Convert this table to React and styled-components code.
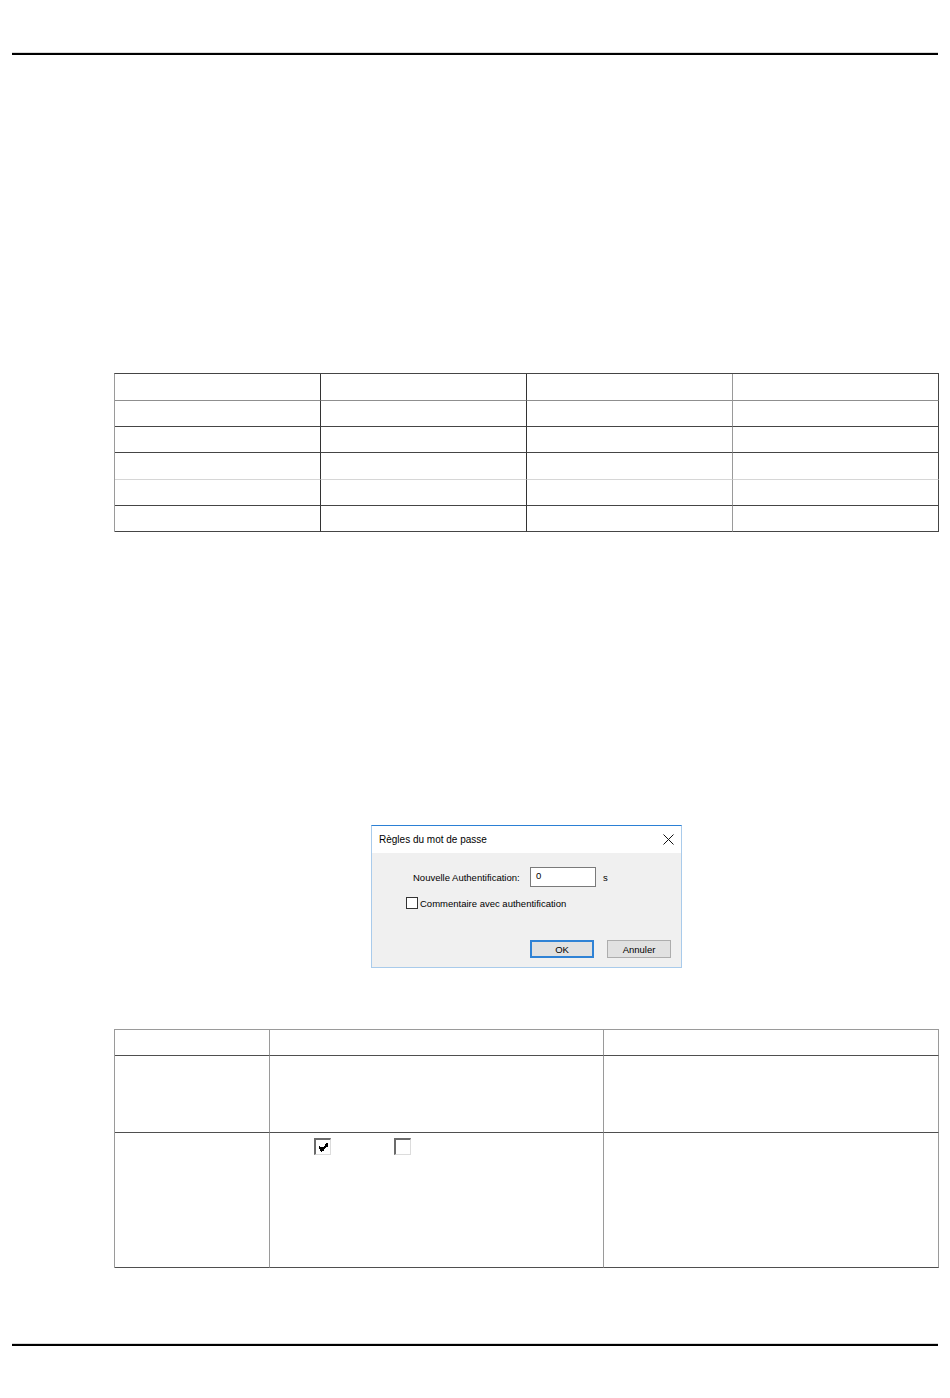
import React from 'react';
import styled, { createGlobalStyle } from 'styled-components';

const GlobalStyle = createGlobalStyle`
  html, body { margin: 0; padding: 0; background: #ffffff; }
  body { font-family: "Liberation Sans", Arial, sans-serif; color: #000; }
  *, *::before, *::after { box-sizing: border-box; }
`;

const Page = styled.div`
  width: 950px;
  min-height: 1398px;
  padding: 52px 12px 0;
  display: flex;
  flex-direction: column;
`;

const Rule = styled.div`
  height: 3px;
  width: 926px;
  border-top: 1px solid #d9d9d9;
  background: #000;
  margin-top: ${(p) => p.$mt || 0}px;
`;

const Content = styled.div`
  margin-left: 102px;
  width: 825px;
  display: flex;
  flex-direction: column;
`;

const Grid = styled.div`
  display: grid;
  grid-template-columns: ${(p) => p.$cols};
  border-top: 1px solid ${(p) => p.$top};
  border-left: 1px solid ${(p) => p.$left};
  margin-top: ${(p) => p.$mt}px;
`;

const Cell = styled.div`
  height: ${(p) => p.$h}px;
  border-right: 1px solid ${(p) => p.$vc};
  border-bottom: 1px solid ${(p) => p.$hc};
  display: flex;
  align-items: flex-start;
  gap: ${(p) => p.$gap || 0}px;
  padding: ${(p) => p.$pad || '0'};
`;

const ClassicBox = styled.span`
  width: 17px;
  height: 17px;
  background: #fff;
  border-top: 2px solid #6b6b6b;
  border-left: 2px solid #6b6b6b;
  border-right: 1px solid #dcdcdc;
  border-bottom: 1px solid #dcdcdc;
  display: flex;
  align-items: flex-start;
  justify-content: flex-start;
  padding: 3px 0 0 2px;
`;

const Dialog = styled.div`
  align-self: center;
  width: 311px;
  height: 143px;
  margin-top: 293px;
  display: flex;
  flex-direction: column;
  background: #f0f0f0;
  border: 1px solid #a9cbeb;
  border-top-color: #2b80d5;
`;

const TitleBar = styled.div`
  height: 27px;
  background: #fff;
  display: flex;
  align-items: center;
  justify-content: space-between;
  padding: 0 7px 0 7px;
  font-size: 10px;
`;

const Body = styled.div`
  flex: 1;
  display: flex;
  flex-direction: column;
  padding: 0 10px 9px 0;
  font-size: 9.5px;
`;

const FieldRow = styled.div`
  display: flex;
  align-items: center;
  margin-top: 14px;
  padding-left: 41px;
  height: 20px;
`;

const Label = styled.span`
  width: 117px;
  white-space: nowrap;
`;

const TextInput = styled.div`
  width: 66px;
  height: 20px;
  background: #fff;
  border: 1px solid #7a7a7a;
  padding: 2px 0 0 5px;
  font-size: 9.5px;
`;

const Unit = styled.span`
  margin-left: 7px;
`;

const CheckRow = styled.label`
  display: flex;
  align-items: center;
  margin-top: 10px;
  padding-left: 34px;
  white-space: nowrap;
`;

const WinBox = styled.span`
  width: 12px;
  height: 12px;
  background: #fff;
  border: 1px solid #333;
  margin-right: 2px;
`;

const ButtonRow = styled.div`
  margin-top: auto;
  display: flex;
  justify-content: flex-end;
  gap: 13px;
`;

const Button = styled.div`
  width: 64px;
  height: 18px;
  display: flex;
  align-items: center;
  justify-content: center;
  background: #e1e1e1;
  border: ${(p) => (p.$primary ? '2px solid #2f82d5' : '1px solid #adadad')};
  font-size: 9.5px;
`;

const CloseIcon = () => (
  <svg width="11" height="11" viewBox="0 0 11 11" aria-hidden="true">
    <path d="M0.5 0.5 L10.5 10.5 M10.5 0.5 L0.5 10.5" stroke="#111" strokeWidth="1" fill="none" />
  </svg>
);

const CheckMark = () => (
  <svg width="10" height="9" viewBox="0 0 7 7" shapeRendering="crispEdges" aria-hidden="true">
    <path
      fill="#000"
      d="M6 0h1v3h-1z M5 1h1v3h-1z M4 2h1v3h-1z M0 2h1v3h-1z M1 3h1v3h-1z M2 3h1v4h-1z M3 3h1v3h-1z"
    />
  </svg>
);

const DARK = '#454545';
const GRAY = '#9a9a9a';

const table1Rows = [
  { h: 27, line: '#8f8f8f' },
  { h: 26, line: DARK },
  { h: 26, line: DARK },
  { h: 27, line: '#d6d6d6' },
  { h: 26, line: DARK },
  { h: 26, line: DARK },
];
const table1Cols = ['#333', '#333', GRAY, DARK];

const table2Rows = [26, 77, 135];

export default function App() {
  return (
    <>
      <GlobalStyle />
      <Page>
        <Rule />
        <Content>
          <Grid $cols="repeat(4, 206px)" $top={DARK} $left={GRAY} $mt={318}>
            {table1Rows.map((r, ri) =>
              table1Cols.map((c, ci) => (
                <Cell key={`${ri}-${ci}`} $h={r.h} $vc={c} $hc={r.line} />
              ))
            )}
          </Grid>

          <Dialog>
            <TitleBar>
              <span>Règles du mot de passe</span>
              <CloseIcon />
            </TitleBar>
            <Body>
              <FieldRow>
                <Label>Nouvelle Authentification:</Label>
                <TextInput>0</TextInput>
                <Unit>s</Unit>
              </FieldRow>
              <CheckRow>
                <WinBox />
                Commentaire avec authentification
              </CheckRow>
              <ButtonRow>
                <Button $primary>OK</Button>
                <Button>Annuler</Button>
              </ButtonRow>
            </Body>
          </Dialog>

          <Grid $cols="155px 334px 335px" $top={GRAY} $left={GRAY} $mt={61}>
            {table2Rows.map((h, ri) =>
              [0, 1, 2].map((ci) => (
                <Cell
                  key={`${ri}-${ci}`}
                  $h={h}
                  $vc={GRAY}
                  $hc="#4f4f4f"
                  $pad={ri === 2 && ci === 1 ? '5px 0 0 44px' : '0'}
                  $gap={63}
                >
                  {ri === 2 && ci === 1 && (
                    <>
                      <ClassicBox>
                        <CheckMark />
                      </ClassicBox>
                      <ClassicBox />
                    </>
                  )}
                </Cell>
              ))
            )}
          </Grid>
        </Content>
        <Rule $mt={75} />
      </Page>
    </>
  );
}
